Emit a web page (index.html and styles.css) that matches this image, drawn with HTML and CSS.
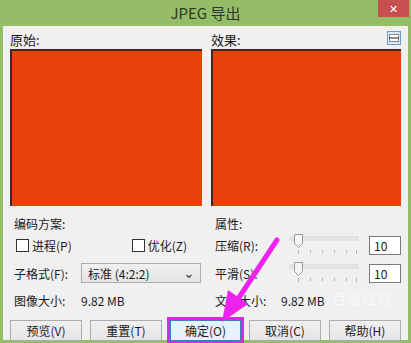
FILE: index.html
```html
<!DOCTYPE html>
<html lang="zh-CN">
<head>
    <meta charset="UTF-8">
    <title>JPEG 导出</title>
    <link rel="stylesheet" href="styles.css">
</head>
<body>
    <div class="window">
        <div class="titlebar">
            <span class="title">JPEG 导出</span>
            <span class="close">✕</span>
        </div>
        <div class="client">
            <div class="previews">
                <div class="pane">
                    <div class="pane-label">原始:</div>
                    <div class="swatch"></div>
                </div>
                <div class="pane">
                    <div class="pane-label">效果:
                        <svg class="fit-icon" width="14" height="14" viewBox="0 0 14 14">
                            <rect x="0.5" y="0.5" width="13" height="13" fill="#dceaf8" stroke="#6a9bd0"/>
                            <rect x="2.5" y="3.5" width="9" height="7" fill="#fff" stroke="#222" stroke-dasharray="1 1"/>
                            <line x1="2" y1="7" x2="12" y2="7" stroke="#222" stroke-width="1"/>
                        </svg>
                    </div>
                    <div class="swatch"></div>
                </div>
            </div>

            <div class="options">
                <div class="col">
                    <div class="row">编码方案:</div>
                    <div class="row checks">
                        <label class="check"><span class="box"></span>进程(P)</label>
                        <label class="check"><span class="box"></span>优化(Z)</label>
                    </div>
                    <div class="row">
                        <span class="lbl-left">子格式(F):</span>
                        <div class="select">标准 (4:2:2)<span class="caret">⌄</span></div>
                    </div>
                    <div class="row">
                        <span class="lbl-left">图像大小:</span>
                        <span>9.82 MB</span>
                    </div>
                </div>
                <div class="col">
                    <div class="row">属性:</div>
                    <div class="row">
                        <span class="lbl-right">压缩(R):</span>
                        <svg class="slider" width="72" height="24" viewBox="0 0 72 24">
                            <rect x="1" y="4" width="68" height="3" fill="#e7eaea" stroke="#d6d6d6"/>
                            <path d="M5.5 1.5h8v9l-4 4l-4-4z" fill="#f4f4f4" stroke="#9a9a9a"/>
                            <g stroke="#b4b4b4">
                                <line x1="9.5" y1="17" x2="9.5" y2="21"/><line x1="21.5" y1="17" x2="21.5" y2="20"/>
                                <line x1="33.5" y1="17" x2="33.5" y2="20"/><line x1="45.5" y1="17" x2="45.5" y2="20"/>
                                <line x1="57.5" y1="17" x2="57.5" y2="20"/><line x1="67.5" y1="17" x2="67.5" y2="21"/>
                            </g>
                        </svg>
                        <div class="num">10</div>
                    </div>
                    <div class="row">
                        <span class="lbl-right">平滑(S):</span>
                        <svg class="slider" width="72" height="24" viewBox="0 0 72 24">
                            <rect x="1" y="4" width="68" height="3" fill="#e7eaea" stroke="#d6d6d6"/>
                            <path d="M5.5 1.5h8v9l-4 4l-4-4z" fill="#f4f4f4" stroke="#9a9a9a"/>
                            <g stroke="#b4b4b4">
                                <line x1="9.5" y1="17" x2="9.5" y2="21"/><line x1="21.5" y1="17" x2="21.5" y2="20"/>
                                <line x1="33.5" y1="17" x2="33.5" y2="20"/><line x1="45.5" y1="17" x2="45.5" y2="20"/>
                                <line x1="57.5" y1="17" x2="57.5" y2="20"/><line x1="67.5" y1="17" x2="67.5" y2="21"/>
                            </g>
                        </svg>
                        <div class="num">10</div>
                    </div>
                    <div class="row">
                        <span class="lbl-size">文件大小:</span>
                        <span>9.82 MB</span>
                    </div>
                </div>
            </div>

            <div class="buttons">
                <button>预览(V)</button>
                <button>重置(T)</button>
                <button class="primary">确定(O)</button>
                <button>取消(C)</button>
                <button>帮助(H)</button>
            </div>
        </div>

        <div class="watermark">百度经验</div>
        <svg class="arrow" width="411" height="343" viewBox="0 0 411 343">
            <path d="M277 240 L236 302" stroke="#ee22ee" stroke-width="5" stroke-linecap="round"/>
            <polygon points="222,322 228,290 248,304" fill="#ee22ee"/>
        </svg>
    </div>
</body>
</html>
```

FILE: styles.css
```css
body {
    margin: 0;
    background-color: #95bc66;
    font-family: "Noto Sans CJK SC", "Noto Sans", sans-serif;
    font-size: 12px;
    color: #1a1a1a;
}
.window {
    position: relative;
    width: 411px;
    height: 343px;
    overflow: hidden;
}
.titlebar {
    height: 26px;
    display: flex;
    justify-content: center;
    align-items: center;
    position: relative;
}
.title {
    font-size: 15px;
    color: #2f3a25;
    margin-top: -1px;
}
.close {
    position: absolute;
    right: 2px;
    top: 0;
    width: 31px;
    height: 17px;
    background-color: #c74f4f;
    color: white;
    font-size: 11px;
    text-align: center;
    line-height: 17px;
}
.client {
    margin: 0 3px;
    height: 314px;
    background-color: #f0f0f0;
    padding: 0 7px;
    box-sizing: border-box;
}
.previews {
    display: grid;
    grid-template-columns: 192px 190px;
    gap: 9px;
}
.pane-label {
    height: 23px;
    line-height: 28px;
    font-size: 13px;
    position: relative;
}
.fit-icon {
    position: absolute;
    right: 0;
    top: 5px;
}
.swatch {
    height: 157px;
    background-color: #e8420b;
    border-top: 2px solid #3a2a22;
    border-left: 2px solid #3a2a22;
    box-sizing: border-box;
}
.options {
    display: grid;
    grid-template-columns: 187px 186px;
    gap: 14px;
    margin-top: 6px;
    padding-left: 4px;
}
.row {
    height: 22px;
    display: flex;
    align-items: center;
    margin-bottom: 6px;
}
.row:first-child {
    margin-bottom: 0;
}
.col .row:nth-child(3) {
    margin-bottom: 5px;
}
.checks {
    justify-content: space-between;
    padding-right: 14px;
}
.check {
    display: flex;
    align-items: center;
}
.box {
    width: 11px;
    height: 11px;
    border: 1px solid #333;
    background: white;
    margin: 0 3px 0 2px;
}
.lbl-left {
    width: 67px;
}
.lbl-right {
    width: 74px;
}
.lbl-size {
    width: 66px;
}
.select {
    width: 120px;
    height: 20px;
    box-sizing: border-box;
    border: 1px solid #acacac;
    background: linear-gradient(#f0f0f0, #e5e5e5);
    display: flex;
    align-items: center;
    padding-left: 6px;
    position: relative;
}
.caret {
    position: absolute;
    right: 5px;
    top: -2px;
    font-size: 14px;
    color: #444;
}
.slider {
    margin-right: 8px;
}
.num {
    width: 32px;
    height: 19px;
    box-sizing: border-box;
    border: 1px solid #7a7a7a;
    background: white;
    padding-left: 4px;
    line-height: 17px;
}
.buttons {
    display: flex;
    gap: 8px;
    margin-top: 3px;
}
button {
    width: 72px;
    height: 21px;
    font-family: inherit;
    font-size: 12px;
    border: 1px solid #acacac;
    background: linear-gradient(#f0f0f0, #e5e5e5);
    padding: 0;
    color: #1a1a1a;
}
button.primary {
    width: 71px;
    background: #e5f1fb;
    border: 1px solid #3c7fb1;
    outline: 3px solid #e225e2;
    outline-offset: 0;
}
.watermark {
    position: absolute;
    left: 332px;
    top: 288px;
    font-size: 14px;
    color: rgba(255, 255, 255, 0.6);
    letter-spacing: 1px;
}
.arrow {
    position: absolute;
    left: 0;
    top: 0;
}
```
